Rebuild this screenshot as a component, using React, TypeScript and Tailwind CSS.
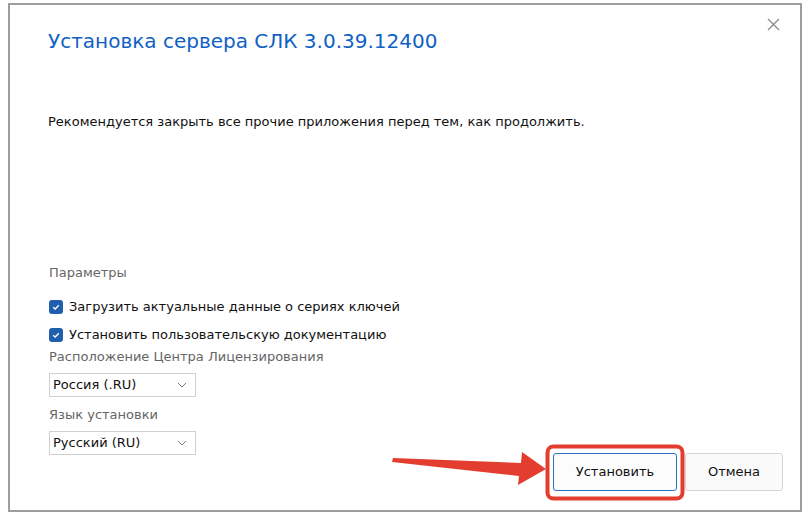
import React from 'react';

const font = { fontFamily: '"DejaVu Sans", Verdana, sans-serif' };

function Check({ label }: { label: string }) {
  return (
    <label className="flex h-[28px] items-center gap-[6px] text-[13px] text-[#111]">
      <span className="flex h-[14px] w-[14px] items-center justify-center rounded-[3px] bg-[#1f5fae]">
        <svg width="10" height="10" viewBox="0 0 10 10">
          <path d="M2.2 5.2 L4.2 7 L7.8 3.2" fill="none" stroke="#fff" strokeWidth="1.3" />
        </svg>
      </span>
      {label}
    </label>
  );
}

function Select({ value }: { value: string }) {
  return (
    <div className="flex h-[24px] w-[147px] items-center justify-between border border-[#d0d0d0] bg-white pl-[3px] pr-[8px] text-[13px] text-[#111]">
      <span>{value}</span>
      <svg width="10" height="6" viewBox="0 0 10 6">
        <path d="M1 1 L5 5 L9 1" fill="none" stroke="#777" strokeWidth="1" />
      </svg>
    </div>
  );
}

export default function App() {
  return (
    <div className="relative h-[519px] w-[805px] overflow-hidden bg-white" style={font}>
      <div className="relative ml-[8px] mt-[3px] flex h-[509px] w-[794px] flex-col border-2 border-[#9e9e9e] bg-white">
        {/* close */}
        <svg className="absolute right-[20px] top-[13px]" width="13" height="13" viewBox="0 0 13 13">
          <path d="M1 1 L12 12 M12 1 L1 12" stroke="#8a8a8a" strokeWidth="1.3" />
        </svg>

        <h1 className="ml-[38px] mt-[22px] text-[20px] leading-[28px] text-[#0f62c4]">
          Установка сервера СЛК 3.0.39.12400
        </h1>

        <p className="ml-[38px] mt-[58px] text-[13px] leading-[18px] text-[#111]">
          Рекомендуется закрыть все прочие приложения перед тем, как продолжить.
        </p>

        <div className="flex flex-1 items-end justify-between pl-[39px] pr-[17px] pb-[19px]">
          <div className="mb-[36px] flex flex-col">
            <div className="text-[13px] leading-[18px] text-[#666]">Параметры</div>
            <div className="mt-[11px] flex flex-col">
              <Check label="Загрузить актуальные данные о сериях ключей" />
              <Check label="Установить пользовательскую документацию" />
            </div>
            <div className="-mt-px text-[13px] leading-[18px] text-[#666]">Расположение Центра Лицензирования</div>
            <div className="mt-[7px]">
              <Select value="Россия (.RU)" />
            </div>
            <div className="mt-[9px] text-[13px] leading-[18px] text-[#666]">Язык установки</div>
            <div className="mt-[7px]">
              <Select value="Русский (RU)" />
            </div>
          </div>

          <div className="flex gap-[8px]">
            <button className="h-[38px] w-[124px] rounded-[3px] border border-[#2a72c9] bg-[#fcfcfc] text-[13px] text-[#111]">
              Установить
            </button>
            <button className="h-[38px] w-[98px] rounded-[3px] border border-[#d4d4d4] bg-[#fafafa] text-[13px] text-[#111]">
              Отмена
            </button>
          </div>
        </div>
      </div>

      {/* annotation overlay */}
      <svg className="pointer-events-none absolute left-0 top-0" width="805" height="519" viewBox="0 0 805 519">
        <rect x="547.5" y="446.5" width="135" height="52" rx="6" fill="none" stroke="#e23d2e" strokeWidth="4" />
        <path d="M393 458 L521 463 L522 452 L546 469 L518 485 L519 476 L392 462 Z" fill="#e23d2e" />
      </svg>
    </div>
  );
}
